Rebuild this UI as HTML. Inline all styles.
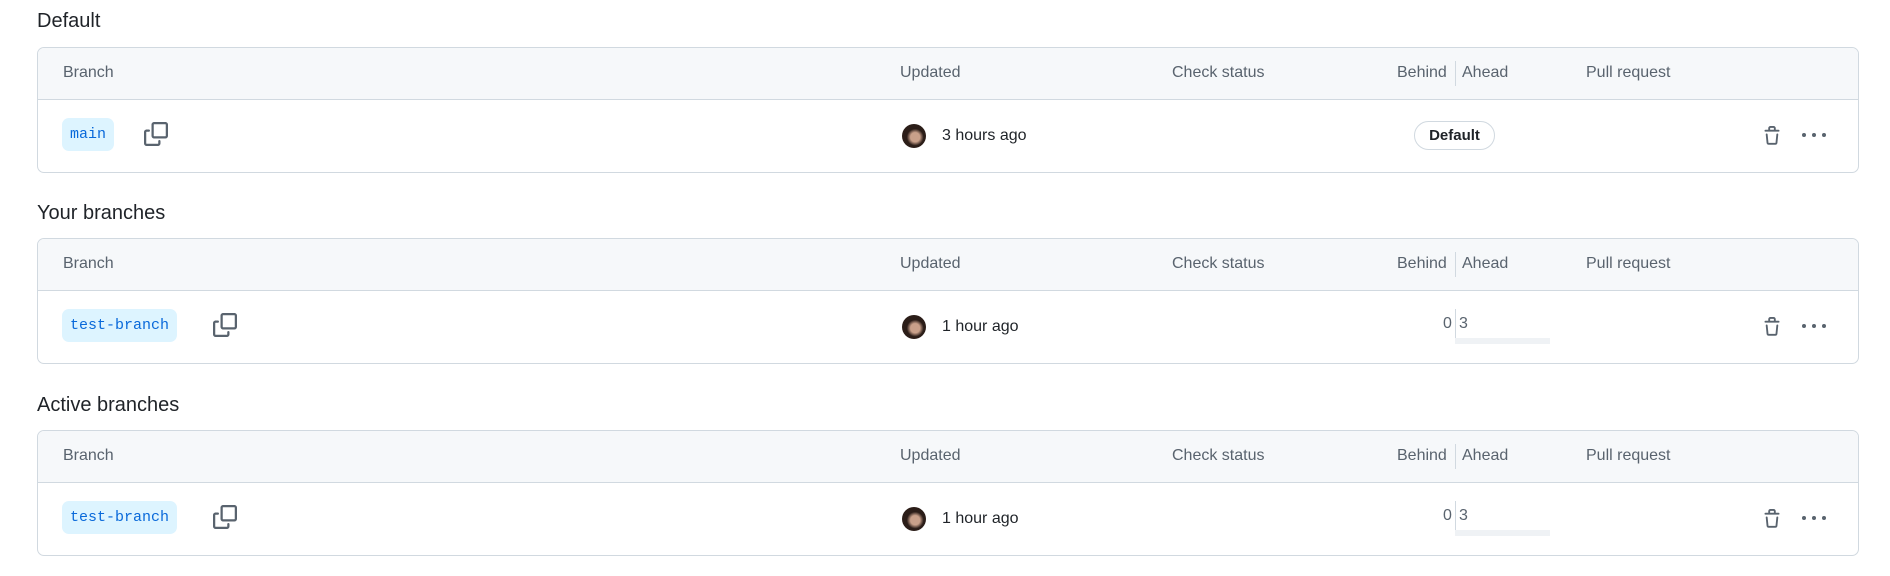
<!DOCTYPE html>
<html><head><style>
body{margin:0;width:1890px;height:576px;background:#fff;font-family:"Liberation Sans",sans-serif;position:relative;overflow:hidden;color:#1f2328}
.h{position:absolute;left:37px;font-size:20px;line-height:24px;font-weight:500}
.box{position:absolute;left:37px;width:1820px;height:124px;border:1px solid #d1d9e0;border-radius:7px;overflow:hidden}
.hd{position:absolute;left:0;top:0;right:0;height:51px;background:#f6f8fa;border-bottom:1px solid #d1d9e0}
.t{position:absolute;font-size:16px;color:#59636e;line-height:20px}
.hd .t{top:15px}
.sep{position:absolute;left:1417px;width:1px;background:#d1d9e0}
.pill{position:absolute;left:24px;top:70px;height:33px;border-radius:7px;background:#ddf4ff;color:#0969da;font-family:"Liberation Mono",monospace;font-size:15px;line-height:33px;padding:0 8px}
.cp{position:absolute;top:74px}
.av{position:absolute;left:864px;top:76px;width:24px;height:24px;border-radius:50%;background:radial-gradient(circle at 55% 55%,#c9a08a 0 25%,#2b1d18 45%)}
.up{position:absolute;left:904px;top:78px;font-size:16px;color:#1f2328;line-height:20px}
.tr{position:absolute;left:1724px;top:76px}
.dots{position:absolute;left:1763px;top:84px}
</style></head><body>
<div class="h" style="top:9px">Default</div>
<div class="h" style="top:201px">Your branches</div>
<div class="h" style="top:393px">Active branches</div>

<div class="box" style="top:47px">
 <div class="hd"><span class="t" style="left:25px">Branch</span><span class="t" style="left:862px">Updated</span><span class="t" style="left:1134px">Check status</span><span class="t" style="left:1359px">Behind</span><div class="sep" style="top:13px;height:25px"></div><span class="t" style="left:1424px">Ahead</span><span class="t" style="left:1548px">Pull request</span></div>
 <div class="pill">main</div>
 <svg class="cp" style="left:106px" width="24" height="24" viewBox="0 0 16 16" fill="#59636e"><path d="M0 6.75C0 5.784.784 5 1.750 5h1.5a.75.75 0 0 1 0 1.5h-1.5a.25.25 0 0 0-.25.25v7.5c0 .138.112.25.25.25h7.5a.25.25 0 0 0 .25-.25v-1.5a.75.75 0 0 1 1.5 0v1.5A1.75 1.75 0 0 1 9.25 16h-7.5A1.75 1.75 0 0 1 0 14.25Z"/><path d="M5 1.75C5 .784 5.784 0 6.75 0h7.5C15.216 0 16 .784 16 1.75v7.5A1.75 1.75 0 0 1 14.25 11h-7.5A1.75 1.75 0 0 1 5 9.25Zm1.75-.25a.25.25 0 0 0-.25.25v7.5c0 .138.112.25.25.25h7.5a.25.25 0 0 0 .25-.25v-7.5a.25.25 0 0 0-.25-.25Z"/></svg>
 <div class="av"></div><div class="up">3 hours ago</div>
 <div style="position:absolute;left:1376px;top:73px;width:81px;height:29px;border:1px solid #d1d9e0;border-radius:15px;box-sizing:border-box;font-size:15px;font-weight:bold;line-height:27px;text-align:center">Default</div>
 <svg class="tr" width="20" height="24" viewBox="0 0 16 16" fill="#59636e"><path d="M11 1.75V3h2.25a.75.75 0 0 1 0 1.5H2.75a.75.75 0 0 1 0-1.5H5V1.75C5 .784 5.784 0 6.750 0h2.5C10.216 0 11 .784 11 1.75ZM4.496 6.675l.66 6.6a.25.25 0 0 0 .249.225h5.19a.25.25 0 0 0 .249-.225l.66-6.6a.75.75 0 0 1 1.492.149l-.66 6.6A1.748 1.748 0 0 1 10.595 15h-5.19a1.75 1.75 0 0 1-1.741-1.575l-.66-6.6a.75.75 0 1 1 1.492-.15ZM6.5 1.75V3h3V1.75a.25.25 0 0 0-.25-.25h-2.5a.25.25 0 0 0-.25.25Z"/></svg>
 <svg class="dots" width="26" height="6"><circle cx="3" cy="3" r="2" fill="#59636e"/><circle cx="13" cy="3" r="2" fill="#59636e"/><circle cx="23" cy="3" r="2" fill="#59636e"/></svg>
</div>

<div class="box" style="top:238px">
 <div class="hd"><span class="t" style="left:25px">Branch</span><span class="t" style="left:862px">Updated</span><span class="t" style="left:1134px">Check status</span><span class="t" style="left:1359px">Behind</span><div class="sep" style="top:13px;height:25px"></div><span class="t" style="left:1424px">Ahead</span><span class="t" style="left:1548px">Pull request</span></div>
 <div class="pill">test-branch</div>
 <svg class="cp" style="left:175px" width="24" height="24" viewBox="0 0 16 16" fill="#59636e"><path d="M0 6.75C0 5.784.784 5 1.75 5h1.5a.75.75 0 0 1 0 1.5h-1.5a.25.25 0 0 0-.25.25v7.5c0 .138.112.25.25.25h7.5a.25.25 0 0 0 .25-.25v-1.5a.75.75 0 0 1 1.5 0v1.5A1.75 1.75 0 0 1 9.25 16h-7.5A1.75 1.75 0 0 1 0 14.25Z"/><path d="M5 1.75C5 .784 5.784 0 6.75 0h7.5C15.216 0 16 .784 16 1.75v7.5A1.75 1.75 0 0 1 14.25 11h-7.5A1.75 1.75 0 0 1 5 9.25Zm1.75-.25a.25.25 0 0 0-.25.25v7.5c0 .138.112.25.25.25h7.5a.25.25 0 0 0 .25-.25v-7.5a.25.25 0 0 0-.25-.25Z"/></svg>
 <div class="av"></div><div class="up">1 hour ago</div>
 <span class="t" style="left:1405px;top:75px">0</span><div class="sep" style="top:70px;height:35px"></div><span class="t" style="left:1421px;top:75px">3</span>
 <div style="position:absolute;left:1417px;top:99px;width:95px;height:6px;background:#eff2f5"></div>
 <svg class="tr" width="20" height="24" viewBox="0 0 16 16" fill="#59636e"><path d="M11 1.75V3h2.25a.75.75 0 0 1 0 1.5H2.75a.75.75 0 0 1 0-1.5H5V1.75C5 .784 5.784 0 6.75 0h2.5C10.216 0 11 .784 11 1.75ZM4.496 6.675l.66 6.6a.25.25 0 0 0 .249.225h5.19a.25.25 0 0 0 .249-.225l.66-6.6a.75.75 0 0 1 1.492.149l-.66 6.6A1.748 1.748 0 0 1 10.595 15h-5.19a1.75 1.75 0 0 1-1.741-1.575l-.66-6.6a.75.75 0 1 1 1.492-.15ZM6.5 1.75V3h3V1.75a.25.25 0 0 0-.25-.25h-2.5a.25.25 0 0 0-.25.25Z"/></svg>
 <svg class="dots" width="26" height="6"><circle cx="3" cy="3" r="2" fill="#59636e"/><circle cx="13" cy="3" r="2" fill="#59636e"/><circle cx="23" cy="3" r="2" fill="#59636e"/></svg>
</div>

<div class="box" style="top:430px">
 <div class="hd"><span class="t" style="left:25px">Branch</span><span class="t" style="left:862px">Updated</span><span class="t" style="left:1134px">Check status</span><span class="t" style="left:1359px">Behind</span><div class="sep" style="top:13px;height:25px"></div><span class="t" style="left:1424px">Ahead</span><span class="t" style="left:1548px">Pull request</span></div>
 <div class="pill">test-branch</div>
 <svg class="cp" style="left:175px" width="24" height="24" viewBox="0 0 16 16" fill="#59636e"><path d="M0 6.75C0 5.784.784 5 1.75 5h1.5a.75.75 0 0 1 0 1.5h-1.5a.25.25 0 0 0-.25.25v7.5c0 .138.112.25.25.25h7.5a.25.25 0 0 0 .25-.25v-1.5a.75.75 0 0 1 1.5 0v1.5A1.75 1.75 0 0 1 9.25 16h-7.5A1.75 1.75 0 0 1 0 14.25Z"/><path d="M5 1.75C5 .784 5.784 0 6.75 0h7.5C15.216 0 16 .784 16 1.75v7.5A1.75 1.75 0 0 1 14.25 11h-7.5A1.75 1.75 0 0 1 5 9.25Zm1.75-.25a.25.25 0 0 0-.25.25v7.5c0 .138.112.25.25.25h7.5a.25.25 0 0 0 .25-.25v-7.5a.25.25 0 0 0-.25-.25Z"/></svg>
 <div class="av"></div><div class="up">1 hour ago</div>
 <span class="t" style="left:1405px;top:75px">0</span><div class="sep" style="top:70px;height:35px"></div><span class="t" style="left:1421px;top:75px">3</span>
 <div style="position:absolute;left:1417px;top:99px;width:95px;height:6px;background:#eff2f5"></div>
 <svg class="tr" width="20" height="24" viewBox="0 0 16 16" fill="#59636e"><path d="M11 1.75V3h2.25a.75.75 0 0 1 0 1.5H2.75a.75.75 0 0 1 0-1.5H5V1.75C5 .784 5.784 0 6.75 0h2.5C10.216 0 11 .784 11 1.75ZM4.496 6.675l.66 6.6a.25.25 0 0 0 .249.225h5.19a.25.25 0 0 0 .249-.225l.66-6.6a.75.75 0 0 1 1.492.149l-.66 6.6A1.748 1.748 0 0 1 10.595 15h-5.19a1.75 1.75 0 0 1-1.741-1.575l-.66-6.6a.75.75 0 1 1 1.492-.15ZM6.5 1.75V3h3V1.75a.25.25 0 0 0-.25-.25h-2.5a.25.25 0 0 0-.25.25Z"/></svg>
 <svg class="dots" width="26" height="6"><circle cx="3" cy="3" r="2" fill="#59636e"/><circle cx="13" cy="3" r="2" fill="#59636e"/><circle cx="23" cy="3" r="2" fill="#59636e"/></svg>
</div>
</body></html>
